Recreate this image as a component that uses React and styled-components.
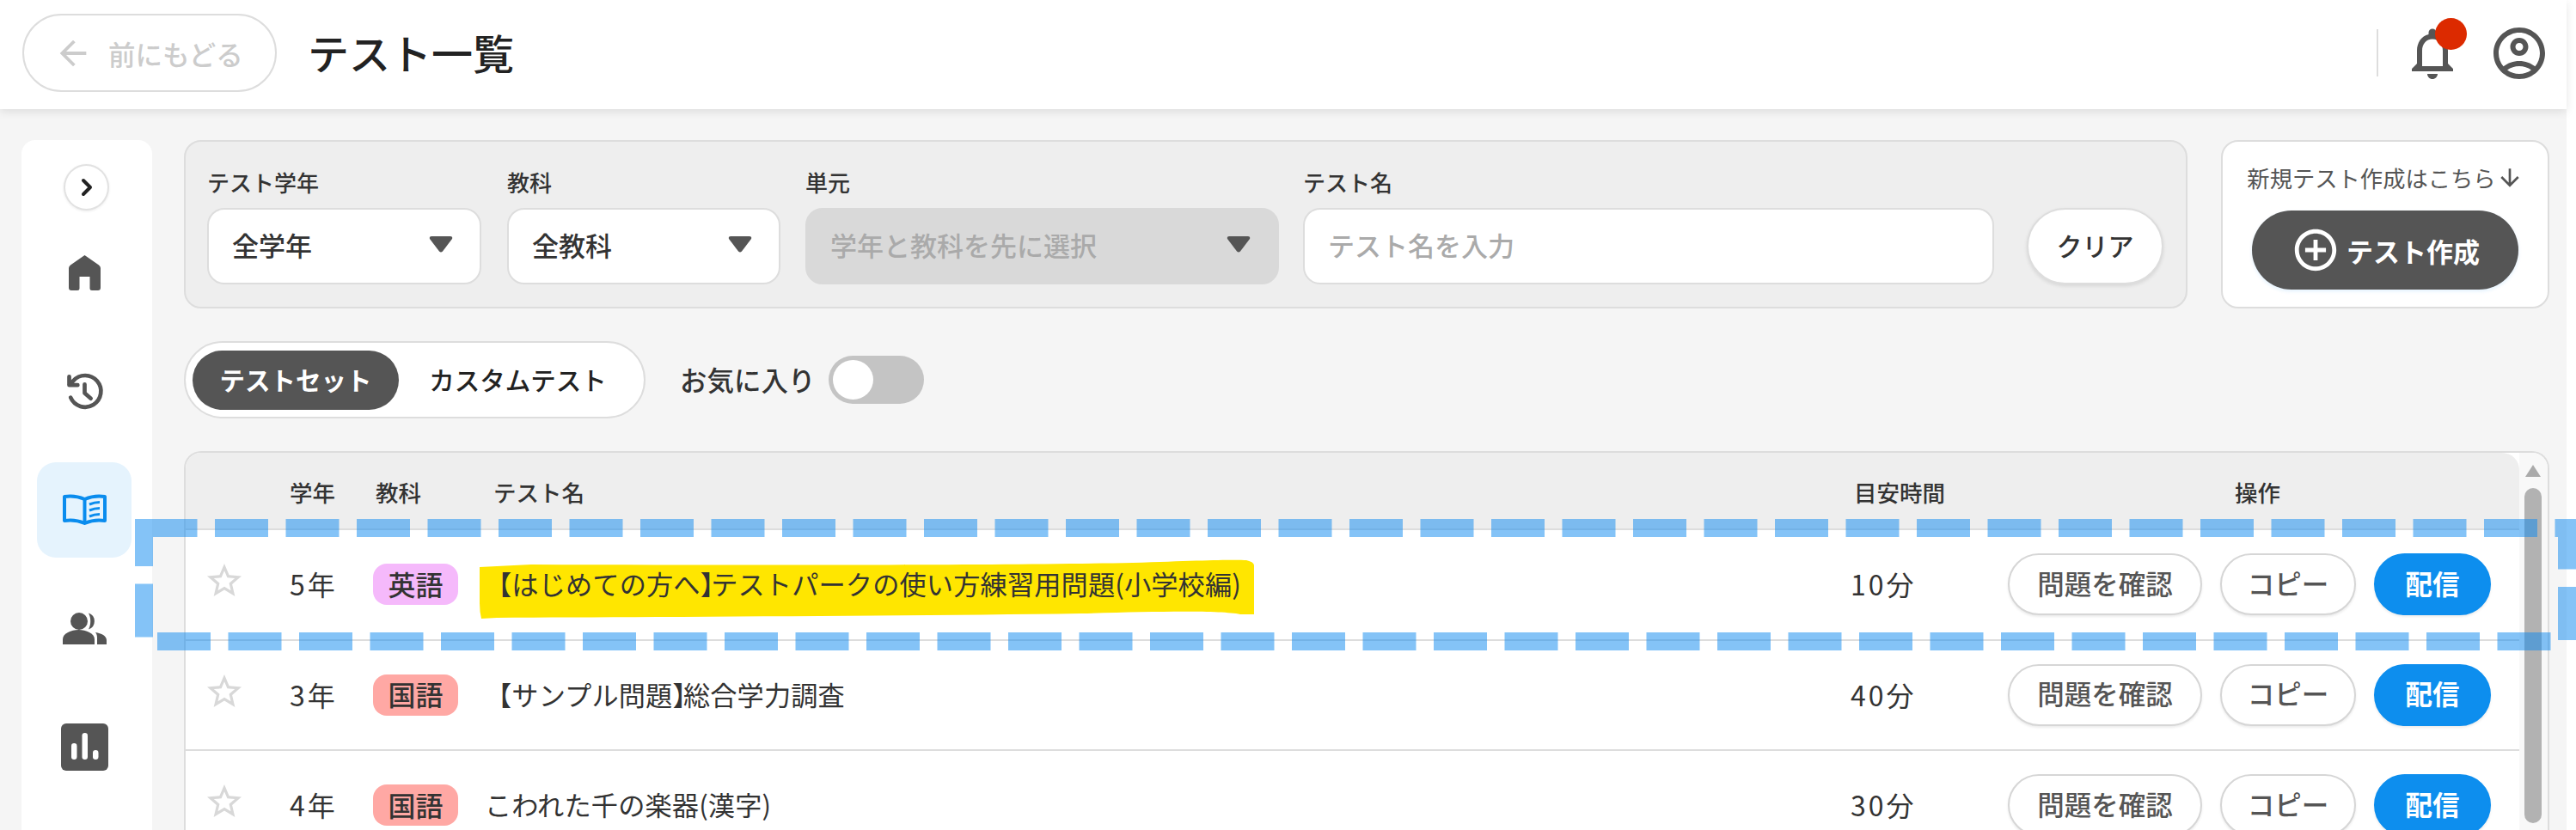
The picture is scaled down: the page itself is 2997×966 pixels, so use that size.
import React from 'react'
import styled, { createGlobalStyle } from 'styled-components'

const GlobalStyle = createGlobalStyle`
  html, body {
    margin: 0;
    padding: 0;
    background: #fff;
    overflow: hidden;
  }
  * {
    box-sizing: border-box;
  }
  body {
    font-family: "Noto Sans CJK JP", "Noto Sans", sans-serif;
    color: #333;
  }
`

const ICONS = {
  back: 'M20 11H7.83l5.59-5.59L12 4l-8 8 8 8 1.41-1.41L7.83 13H20v-2z',
  down: 'M20 12l-1.41-1.41L13 16.17V4h-2v12.17l-5.58-5.59L4 12l8 8 8-8z',
  plus: 'M13 7h-2v4H7v2h4v4h2v-4h4v-2h-4V7zm-1-5C6.48 2 2 6.48 2 12s4.48 10 10 10 10-4.48 10-10S17.52 2 12 2zm0 18c-4.41 0-8-3.59-8-8s3.59-8 8-8 8 3.59 8 8-3.59 8-8 8z',
  bell: 'M12 22c1.1 0 2-.9 2-2h-4c0 1.1.9 2 2 2zm6-6v-5c0-3.07-1.63-5.64-4.5-6.32V4c0-.83-.67-1.5-1.5-1.5s-1.5.67-1.5 1.5v.68C7.64 5.36 6 7.92 6 11v5l-2 2v1h16v-1l-2-2zm-2 1H8v-6c0-2.48 1.51-4.5 4-4.5s4 2.02 4 4.5v6z',
  user: 'M12 2C6.48 2 2 6.48 2 12s4.48 10 10 10 10-4.48 10-10S17.52 2 12 2zM7.35 18.5C8.66 17.56 10.26 17 12 17s3.34.56 4.65 1.5c-1.31.94-2.91 1.5-4.65 1.5s-3.34-.56-4.65-1.5zm10.79-1.38C16.45 15.8 14.32 15 12 15s-4.45.8-6.14 2.12C4.7 15.73 4 13.95 4 12c0-4.42 3.58-8 8-8s8 3.58 8 8c0 1.95-.7 3.73-1.86 5.12zM12 6c-1.93 0-3.5 1.57-3.5 3.5S10.07 13 12 13s3.5-1.57 3.5-3.5S13.93 6 12 6zm0 5c-.83 0-1.5-.67-1.5-1.5S11.17 8 12 8s1.5.67 1.5 1.5S12.83 11 12 11z',
  star: 'M22 9.24l-7.19-.62L12 2 9.19 8.63 2 9.24l5.46 4.73L5.82 21 12 17.27 18.18 21l-1.63-7.03L22 9.24zM12 15.4l-3.76 2.27 1-4.28-3.32-2.88 4.38-.38L12 6.1l1.71 4.04 4.38.38-3.32 2.88 1 4.28L12 15.4z',
}

const Glyph = styled.svg`
  display: block;
  flex: none;
  width: ${(p) => p.$size}px;
  height: ${(p) => p.$size}px;
  fill: ${(p) => p.$color || '#555'};
`

const Icon = ({ name, size, color }) => (
  <Glyph viewBox="0 0 24 24" $size={size} $color={color}>
    <path d={ICONS[name]} />
  </Glyph>
)

const Caret = () => (
  <svg width="28" height="19" viewBox="0 0 28 19">
    <path d="M3 0H25Q28 0 27 3L16 17.5Q14 19.5 12 17.5L1 3Q0 0 3 0Z" fill="#555" />
  </svg>
)

const HomeIcon = () => (
  <svg width="37" height="41" viewBox="0 0 37 41">
    <path
      d="M18.5 0L35 11.5Q37 13 37 15V38Q37 41 34 41H27Q24.5 41 24.5 38.5V25H12.5V38.5Q12.5 41 10 41H3Q0 41 0 38V15Q0 13 2 11.5Z"
      fill="#555"
    />
  </svg>
)

const HistoryIcon = () => (
  <svg width="49" height="49" viewBox="0 0 24 24" fill="none" stroke="#555" strokeWidth="2.3" strokeLinecap="round" strokeLinejoin="round">
    <path d="M4 15.5A9 9 0 1 0 5.5 6L3.5 8" />
    <path d="M3.2 3.6V8.4H8" />
    <path d="M12 8V13L15.5 16" />
  </svg>
)

const BookIcon = () => (
  <svg width="51" height="37" viewBox="0 0 51 37" fill="none" stroke="#0a8cee" strokeWidth="4" strokeLinejoin="round">
    <path d="M2 3Q14 1 25.5 6Q37 1 49 3V31Q37 29 25.5 34Q14 29 2 31Z" />
    <path d="M25.5 6V34" />
    <path d="M31 12Q37 9.5 43 9.5M31 19Q37 16.5 43 16.5M31 26Q37 23.5 43 23.5" strokeWidth="3" />
  </svg>
)

const PeopleIcon = () => (
  <svg width="51" height="37" viewBox="0 0 51 37" fill="#555">
    <circle cx="19" cy="10" r="10" />
    <path d="M0 37V31C0 24 10 20 18.5 20C27 20 37 24 37 31V37Z" />
    <path d="M30 .5A10 10 0 0 1 30 19.5C33 14 33 6 30 .5Z" />
    <path d="M38 23C45 24 51 27 51 32V37H40V31C40 28 40 25 38 23Z" />
  </svg>
)

const ChartIcon = () => (
  <svg width="55" height="55" viewBox="0 0 55 55">
    <rect width="55" height="55" rx="6" fill="#555" />
    <rect x="12" y="23" width="6.5" height="19" rx="3.2" fill="#fff" />
    <rect x="24.5" y="11" width="6.5" height="31" rx="3.2" fill="#fff" />
    <rect x="37" y="31" width="6.5" height="11" rx="3.2" fill="#fff" />
  </svg>
)

const Frame = styled.div`
  position: relative;
  width: 2997px;
  height: 966px;
  overflow: hidden;
`

const Page = styled.div`
  width: 2986px;
  height: 966px;
  background: #f5f5f5;
  display: flex;
  flex-direction: column;
`

const Header = styled.header`
  height: 127px;
  flex: none;
  background: #fff;
  box-shadow: 0 3px 10px rgba(0, 0, 0, 0.1);
  display: flex;
  align-items: center;
  padding: 0 19px 4px 26px;
`

const BackButton = styled.div`
  width: 296px;
  height: 91px;
  border: 2px solid #ddd;
  border-radius: 46px;
  display: flex;
  align-items: center;
  padding-left: 34px;
  gap: 18px;
  color: #ccc;
  font-size: 31.5px;
  font-weight: 500;
`

const Title = styled.h1`
  margin: 0 0 4px 36px;
  font-size: 48px;
  font-weight: 500;
  color: #222;
`

const HeaderRight = styled.div`
  margin-left: auto;
  display: flex;
  align-items: center;
  gap: 29px;
`

const Divider = styled.div`
  width: 2px;
  height: 55px;
  background: #ddd;
  margin-right: -2px;
`

const BellWrap = styled.div`
  position: relative;
`

const Badge = styled.span`
  position: absolute;
  top: -5px;
  left: 39px;
  width: 37px;
  height: 37px;
  border-radius: 50%;
  background: #dc2a00;
`

const Main = styled.div`
  flex: 1;
  min-height: 0;
  display: flex;
  padding: 36px 20px 0 25px;
`

const Sidebar = styled.nav`
  width: 152px;
  flex: none;
  margin-right: 37px;
  background: #fff;
  border-radius: 16px 16px 0 0;
  display: flex;
  flex-direction: column;
  align-items: center;
  padding: 28px 6px 0 0;
  gap: 27px;
`

const ExpandButton = styled.div`
  width: 53px;
  height: 54px;
  margin: 0 0 -10px 5px;
  border: 2px solid #e2e2e2;
  border-radius: 50%;
  background: #fff;
  display: flex;
  align-items: center;
  justify-content: center;
  box-shadow: 0 1px 3px rgba(0, 0, 0, 0.08);
`

const NavItem = styled.div`
  width: 110px;
  height: 111px;
  flex: none;
  border-radius: 22px;
  background: ${(p) => (p.$active ? '#e5f3fd' : 'transparent')};
  display: flex;
  align-items: center;
  justify-content: center;
`

const Content = styled.div`
  flex: 1;
  min-width: 0;
  display: flex;
  flex-direction: column;
`

const TopRow = styled.div`
  display: flex;
  gap: 39px;
  height: 196px;
  flex: none;
`

const FilterPanel = styled.div`
  width: 2331px;
  background: #eee;
  border: 2px solid #ddd;
  border-radius: 20px;
  padding: 33px 0 0 25px;
  display: flex;
  align-items: flex-start;
`

const Field = styled.div`
  width: ${(p) => p.$width}px;
  margin-right: ${(p) => p.$gap}px;
  flex: none;
`

const FieldLabel = styled.div`
  font-size: 26px;
  font-weight: 500;
  line-height: 38px;
  height: 44px;
  margin-top: -5px;
  margin-bottom: 5px;
  color: #333;
`

const Select = styled.div`
  height: 89px;
  border-radius: 20px;
  border: 2px solid ${(p) => (p.$disabled ? '#d9d9d9' : '#ddd')};
  background: ${(p) => (p.$disabled ? '#d9d9d9' : '#fff')};
  color: ${(p) => (p.$disabled ? '#aaa' : '#333')};
  font-size: 31px;
  font-weight: 500;
  display: flex;
  align-items: center;
  justify-content: space-between;
  padding: 0 31px 4px 27px;
`

const TextInput = styled(Select)`
  color: #aaa;
`

const ClearButton = styled.div`
  width: 159px;
  height: 89px;
  margin-top: 44px;
  flex: none;
  border-radius: 45px;
  background: #fff;
  border: 2px solid #ddd;
  box-shadow: 0 2px 4px rgba(0, 0, 0, 0.1);
  display: flex;
  align-items: center;
  justify-content: center;
  font-size: 30px;
  font-weight: 500;
  padding-bottom: 3px;
`

const CreateCard = styled.div`
  flex: 1;
  background: #fff;
  border: 2px solid #ddd;
  border-radius: 20px;
  display: flex;
  flex-direction: column;
  align-items: center;
  padding-top: 23px;
`

const CreateHint = styled.div`
  display: flex;
  align-items: center;
  font-size: 26.3px;
  line-height: 38px;
  color: #555;
`

const CreateButton = styled.div`
  width: 310px;
  height: 92px;
  margin-top: 19px;
  border-radius: 46px;
  background: #555;
  color: #fff;
  font-size: 31px;
  font-weight: 700;
  display: flex;
  align-items: center;
  justify-content: center;
  gap: 7px;
  box-shadow: 0 2px 4px rgba(13, 142, 238, 0.12);
`

const ModeRow = styled.div`
  display: flex;
  align-items: center;
  margin-top: 38px;
  height: 90px;
  flex: none;
`

const Segment = styled.div`
  width: 537px;
  height: 90px;
  background: #fff;
  border: 2px solid #ddd;
  border-radius: 45px;
  display: flex;
  align-items: center;
  padding-left: 8px;
`

const SegmentItem = styled.div`
  width: ${(p) => p.$width}px;
  height: 69px;
  border-radius: 35px;
  background: ${(p) => (p.$active ? '#555' : 'transparent')};
  color: ${(p) => (p.$active ? '#fff' : '#222')};
  font-size: 29.5px;
  font-weight: ${(p) => (p.$active ? 700 : 500)};
  display: flex;
  align-items: center;
  justify-content: center;
  padding-bottom: 3px;
`

const FavLabel = styled.div`
  margin-left: 40px;
  width: 154px;
  font-size: 31.5px;
  font-weight: 500;
  white-space: nowrap;
  padding-bottom: 3px;
`

const Toggle = styled.div`
  width: 111px;
  height: 56px;
  margin-left: 19px;
  border-radius: 28px;
  background: #c4c4c4;
  padding: 5px;
`

const Knob = styled.div`
  width: 47px;
  height: 46px;
  border-radius: 50%;
  background: #fff;
`

const TableCard = styled.div`
  margin-top: 38px;
  flex: 1;
  min-height: 0;
  display: flex;
  background: #fff;
  border: 2px solid #ddd;
  border-bottom: none;
  border-radius: 20px 20px 0 0;
  overflow: hidden;
`

const TableMain = styled.div`
  flex: 1;
  min-width: 0;
`

const Grid = styled.div`
  display: grid;
  grid-template-columns: 121px 97px 137px 1582px 183px 1fr;
  align-items: center;
`

const HeadRow = styled(Grid)`
  height: 90px;
  background: #eee;
  border-bottom: 2px solid #ddd;
  border-top-right-radius: 20px;
  padding-top: 2px;
  font-size: 26.5px;
  font-weight: 500;
  color: #333;
`

const HeadCell = styled.div`
  padding-left: ${(p) => p.$pad || 0}px;
`

const Row = styled(Grid)`
  height: 128.5px;
  border-bottom: 2px solid #ddd;
  font-size: 31.2px;
  color: #333;
`

const StarCell = styled.div`
  padding: 0 0 8px 21px;
`

const NumberCell = styled.div`
  font-size: 32px;
  letter-spacing: 3px;
  padding-bottom: 2px;
`

const Tag = styled.span`
  width: 99px;
  height: 48px;
  border-radius: 16px;
  display: flex;
  align-items: center;
  justify-content: center;
  font-size: 32px;
  font-weight: 500;
  padding-bottom: 3px;
  background: ${(p) => p.$bg};
`

const TitleCell = styled.div`
  position: relative;
  align-self: stretch;
  display: flex;
  align-items: center;
  white-space: nowrap;
  padding-bottom: 3px;
`

const TitleText = styled.span`
  position: relative;
  z-index: 1;
  margin-left: -7px;
  letter-spacing: 0.15px;
`

const ClosingBracket = styled.span`
  letter-spacing: -0.6em;
`

const Marker = styled.svg`
  position: absolute;
  top: 35px;
  left: -13px;
  overflow: visible;
`

const Actions = styled.div`
  display: flex;
  gap: 21px;
`

const Pill = styled.div`
  width: ${(p) => p.$width}px;
  height: 72px;
  flex: none;
  border-radius: 36px;
  border: 2px solid ${(p) => (p.$primary ? '#0d8eee' : '#d6d6d6')};
  background: ${(p) => (p.$primary ? '#0d8eee' : '#fff')};
  color: ${(p) => (p.$primary ? '#fff' : '#555')};
  font-size: 31.5px;
  font-weight: ${(p) => (p.$primary ? 700 : 500)};
  display: flex;
  align-items: center;
  justify-content: center;
  padding-bottom: 5px;
  box-shadow: 0 2px 3px rgba(0, 0, 0, 0.08);
`

const ScrollTrack = styled.div`
  width: 33px;
  flex: none;
  background: #f8f8f8;
  display: flex;
  flex-direction: column;
  align-items: center;
  padding: 14px 2px 0 0;
`

const ScrollThumb = styled.div`
  width: 20px;
  height: 390px;
  margin-top: 13px;
  border-radius: 10px;
  background: #b2b2b2;
`

const DashOverlay = styled.svg`
  position: absolute;
  inset: 0;
  pointer-events: none;
  z-index: 5;
`

const TESTS = [
  { grade: '5年', subject: '英語', bg: '#f5b9fb', lead: '【はじめての方へ', rest: 'テストパークの使い方練習用問題(小学校編)', time: '10分', marked: true },
  { grade: '3年', subject: '国語', bg: '#ffa8a4', lead: '【サンプル問題', rest: '総合学力調査', time: '40分' },
  { grade: '4年', subject: '国語', bg: '#ffa8a4', rest: 'こわれた千の楽器(漢字)', time: '30分' },
]

export default function App() {
  return (
    <>
      <GlobalStyle />
      <Frame>
        <Page>
          <Header>
            <BackButton>
              <Icon name="back" size={46} color="#ccc" />
              前にもどる
            </BackButton>
            <Title>テスト一覧</Title>
            <HeaderRight>
              <Divider />
              <BellWrap>
                <Icon name="bell" size={72} />
                <Badge />
              </BellWrap>
              <Icon name="user" size={72} />
            </HeaderRight>
          </Header>

          <Main>
            <Sidebar>
              <ExpandButton>
                <svg width="20" height="24" viewBox="0 0 20 24" fill="none" stroke="#222" strokeWidth="4" strokeLinecap="round" strokeLinejoin="round">
                  <path d="M6 4L14 12L6 20" />
                </svg>
              </ExpandButton>
              <NavItem><HomeIcon /></NavItem>
              <NavItem><HistoryIcon /></NavItem>
              <NavItem $active><BookIcon /></NavItem>
              <NavItem><PeopleIcon /></NavItem>
              <NavItem><ChartIcon /></NavItem>
            </Sidebar>

            <Content>
              <TopRow>
                <FilterPanel>
                  <Field $width={319} $gap={30}>
                    <FieldLabel>テスト学年</FieldLabel>
                    <Select>全学年<Caret /></Select>
                  </Field>
                  <Field $width={318} $gap={29}>
                    <FieldLabel>教科</FieldLabel>
                    <Select>全教科<Caret /></Select>
                  </Field>
                  <Field $width={551} $gap={28}>
                    <FieldLabel>単元</FieldLabel>
                    <Select $disabled>学年と教科を先に選択<Caret /></Select>
                  </Field>
                  <Field $width={804} $gap={38}>
                    <FieldLabel>テスト名</FieldLabel>
                    <TextInput>テスト名を入力</TextInput>
                  </Field>
                  <ClearButton>クリア</ClearButton>
                </FilterPanel>
                <CreateCard>
                  <CreateHint>
                    新規テスト作成はこちら
                    <Icon name="down" size={32} color="#555" />
                  </CreateHint>
                  <CreateButton>
                    <Icon name="plus" size={58} color="#fff" />
                    テスト作成
                  </CreateButton>
                </CreateCard>
              </TopRow>

              <ModeRow>
                <Segment>
                  <SegmentItem $active $width={240}>テストセット</SegmentItem>
                  <SegmentItem $width={277}>カスタムテスト</SegmentItem>
                </Segment>
                <FavLabel>お気に入り</FavLabel>
                <Toggle><Knob /></Toggle>
              </ModeRow>

              <TableCard>
                <TableMain>
                  <HeadRow>
                    <span />
                    <HeadCell $pad={0}>学年</HeadCell>
                    <HeadCell $pad={3}>教科</HeadCell>
                    <HeadCell $pad={3}>テスト名</HeadCell>
                    <HeadCell $pad={4}>目安時間</HeadCell>
                    <HeadCell $pad={264}>操作</HeadCell>
                  </HeadRow>
                  {TESTS.map((t) => (
                    <Row key={t.rest}>
                      <StarCell>
                        <Icon name="star" size={48} color="#d8d8d8" />
                      </StarCell>
                      <NumberCell>{t.grade}</NumberCell>
                      <div><Tag $bg={t.bg}>{t.subject}</Tag></div>
                      <TitleCell>
                        {t.marked && (
                          <Marker width="901" height="68" viewBox="0 0 901 68">
                            <path
                              d="M0 8L60 5C300 6 600 6 760 3C840 0 880 -1 892 0Q901 2 901 6V63L885 63C860 58 780 60 700 62C500 65 200 66 20 67L2 68Q0 60 0 50Z"
                              fill="#ffe600"
                            />
                          </Marker>
                        )}
                        <TitleText>
                          {t.lead && <>{t.lead}<ClosingBracket>】</ClosingBracket></>}
                          {t.rest}
                        </TitleText>
                      </TitleCell>
                      <NumberCell>{t.time}</NumberCell>
                      <Actions>
                        <Pill $width={226}>問題を確認</Pill>
                        <Pill $width={158}>コピー</Pill>
                        <Pill $width={136} $primary>配信</Pill>
                      </Actions>
                    </Row>
                  ))}
                </TableMain>
                <ScrollTrack>
                  <svg width="18" height="14" viewBox="0 0 18 14">
                    <path d="M9 0L18 14H0Z" fill="#aaa" />
                  </svg>
                  <ScrollThumb />
                </ScrollTrack>
              </TableCard>
            </Content>
          </Main>
        </Page>
        <DashOverlay width="2997" height="966">
          <rect
            x="167.5"
            y="614.5"
            width="2819"
            height="132"
            fill="none"
            stroke="rgba(10,135,240,0.5)"
            strokeWidth="21"
            strokeDasharray="62 20.5"
          />
        </DashOverlay>
      </Frame>
    </>
  )
}
